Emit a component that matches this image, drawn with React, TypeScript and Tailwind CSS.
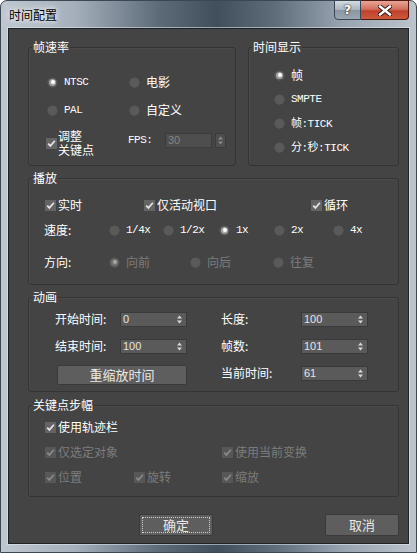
import React from "react";

const cjk = "font-['Noto_Sans_CJK_SC',sans-serif]";
const mono = "font-['Liberation_Mono','Noto_Sans_CJK_SC',monospace]";

function Radio({ on, dim }: { on?: boolean; dim?: boolean }) {
  return (
    <span className="w-[11px] h-[11px] rounded-full shrink-0 flex items-center justify-center bg-[#5a5a5a] shadow-[inset_0_0_1px_rgba(0,0,0,0.5)]">
      {on && (
        <span className={`w-[7px] h-[7px] rounded-full flex items-center justify-center ${dim ? "bg-[#727272]" : "bg-[#a4a4a4]"}`}>
          <span className={`w-[4px] h-[4px] rounded-full ${dim ? "bg-[#a6a6a6]" : "bg-white"}`} />
        </span>
      )}
    </span>
  );
}

function Check({ dim }: { dim?: boolean }) {
  return (
    <span className={`w-[11px] h-[11px] shrink-0 flex items-center justify-center ${dim ? "bg-[#575757]" : "bg-[#646464]"}`}>
      <svg width="9" height="9" viewBox="0 0 9 9">
        <path d="M1.2 4.6 L3.4 6.9 L7.9 1.8" fill="none" stroke={dim ? "#8a8a8a" : "#e4e4e4"} strokeWidth="1.7" />
      </svg>
    </span>
  );
}

function Arrows({ dim }: { dim?: boolean }) {
  return (
    <svg width="5" height="9" viewBox="0 0 5 9" className="shrink-0">
      <path d="M2.5 0.5 L5 3.5 L0 3.5 Z M0 5.5 L5 5.5 L2.5 8.5 Z" fill={dim ? "#8a8a8a" : "#d8d8d8"} />
    </svg>
  );
}

function Spin({ v, w = "w-[67px]" }: { v: string; w?: string }) {
  return (
    <div className={`${w} h-[15px] flex items-center bg-[#5a5a5a] border border-[#3a3a3a] pl-[2px] pr-[4px]`}>
      <span className="flex-1 text-[11px] leading-[13px] text-[#e4e4e4] font-['Liberation_Sans',sans-serif]">{v}</span>
      <Arrows />
    </div>
  );
}

function RadioItem({ label, on, dim, w, isMono }: { label: string; on?: boolean; dim?: boolean; w?: string; isMono?: boolean }) {
  return (
    <div className={`flex items-center h-[16px] ${w ?? ""}`}>
      <Radio on={on} dim={dim} />
      <span
        className={`ml-[6px] ${isMono ? `${mono} text-[11px] tracking-[-0.5px]` : `${cjk} text-[12px]`} leading-[16px] whitespace-nowrap ${
          dim ? "text-[#7c7c7c]" : "text-white"
        }`}
      >
        {label}
      </span>
    </div>
  );
}

function CheckItem({ label, dim, w }: { label: string; dim?: boolean; w?: string }) {
  return (
    <div className={`flex items-center h-[16px] ${w ?? ""}`}>
      <Check dim={dim} />
      <span className={`ml-[2px] ${cjk} text-[12px] leading-[16px] whitespace-nowrap ${dim ? "text-[#7c7c7c]" : "text-white"}`}>
        {label}
      </span>
    </div>
  );
}

function Group({ title, className, children }: { title: string; className?: string; children: React.ReactNode }) {
  return (
    <div className={`relative border border-[#343434] rounded-[3px] shadow-[inset_1px_1px_0_rgba(255,255,255,0.04)] ${className ?? ""}`}>
      <span className={`absolute -top-[9px] left-[3px] px-[1px] bg-[#444] ${cjk} text-[12px] leading-[16px] text-white`}>
        {title}
      </span>
      {children}
    </div>
  );
}

function Label({ text, w }: { text: string; w: string }) {
  return <span className={`${w} shrink-0 ${cjk} text-[12px] leading-[16px] text-white whitespace-nowrap`}>{text}</span>;
}

function Btn({ text, focus, className }: { text: string; focus?: boolean; className?: string }) {
  return (
    <div
      className={`relative flex items-center justify-center bg-[#5e5e5e] border border-[#3a3a3a] rounded-[2px] ${cjk} text-[13px] text-[#e8e8e8] ${className ?? ""}`}
    >
      {focus && <span className="absolute inset-[2px] border border-dotted border-[#cfcfcf]" />}
      {text}
    </div>
  );
}

export default function App() {
  return (
    <div className="w-[417px] h-[553px] bg-white">
      <div className="w-[417px] h-[553px] flex flex-col px-[7px] pb-[8px] rounded-t-[7px] border border-[#3b4753] bg-[linear-gradient(90deg,#bfc7cf_0%,#a4afbb_18%,#5d6a78_38%,#414e5c_52%,#5f6c7a_66%,#97a3b0_82%,#bcc4cc_100%)]">
        {/* title bar */}
        <div className="h-[27px] flex items-start justify-between shrink-0">
          <span className={`mt-[6px] ml-[1px] ${cjk} text-[12px] leading-[16px] text-black [text-shadow:0_0_5px_#fff,0_0_8px_rgba(255,255,255,0.8)]`}>
            时间配置
          </span>
          <div className="flex -mt-[1px]">
            <div className="w-[27px] h-[20px] flex items-center justify-center rounded-bl-[4px] border border-[#3c4652] bg-[linear-gradient(180deg,#d4dbe2_0%,#aab4be_48%,#8a96a2_52%,#9aa6b2_100%)]">
              <span className="font-['DejaVu_Sans',sans-serif] font-bold text-[13px] leading-[14px] text-white [text-shadow:0_0_1px_#222,0_0_2px_#222]">?</span>
            </div>
            <div className="w-[48px] h-[20px] flex items-center justify-center rounded-br-[4px] border border-l-0 border-[#4a1a12] bg-[linear-gradient(180deg,#e8a596_0%,#d3705d_45%,#c0412b_55%,#cc5a3c_100%)]">
              <svg width="14" height="11" viewBox="0 0 14 11">
                <path d="M2 1.5 L12 9.5 M12 1.5 L2 9.5" stroke="#3a1a14" strokeWidth="4.4" strokeLinecap="square" />
                <path d="M2 1.5 L12 9.5 M12 1.5 L2 9.5" stroke="#fff" strokeWidth="2.4" strokeLinecap="square" />
              </svg>
            </div>
          </div>
        </div>

        {/* client */}
        <div className="flex-1 flex flex-col bg-[#444] border border-[#1e2328] shadow-[0_0_0_1px_rgba(230,236,242,0.55)] pt-[18px] pl-[19px] pr-[9px]">
          {/* row 1 */}
          <div className="flex gap-[12px]">
            <Group title="帧速率" className="w-[208px] h-[119px] pt-[26px] pl-[18px]">
              <div className="flex">
                <RadioItem label="NTSC" on isMono w="w-[82px]" />
                <RadioItem label="电影" />
              </div>
              <div className="flex mt-[12px]">
                <RadioItem label="PAL" isMono w="w-[82px]" />
                <RadioItem label="自定义" />
              </div>
              <div className="flex items-center mt-[11px] -ml-[1px]">
                <div className="w-[82px] flex items-center">
                  <Check />
                  <div className={`ml-[1px] ${cjk} text-[12px] text-white flex flex-col`}>
                    <span className="leading-[13px]">调整</span>
                    <span className="leading-[15px]">关键点</span>
                  </div>
                </div>
                <span className={`${mono} text-[11px] tracking-[-0.5px] text-white w-[37px] -mt-[5px]`}>FPS:</span>
                <div className="flex items-center gap-[3px] -mt-[5px]">
                  <div className="w-[47px] h-[15px] flex items-center bg-[#4e4e4e] border border-[#3c3c3c] pl-[2px]">
                    <span className="text-[11px] leading-[13px] text-[#858585] font-['Liberation_Sans',sans-serif]">30</span>
                  </div>
                  <div className="w-[11px] h-[15px] flex items-center justify-center bg-[#4e4e4e] border border-[#3c3c3c]">
                    <Arrows dim />
                  </div>
                </div>
              </div>
            </Group>
            <Group title="时间显示" className="flex-1 h-[119px] pt-[19px] pl-[25px] flex flex-col gap-[8.3px]">
              <RadioItem label="帧" on />
              <RadioItem label="SMPTE" isMono />
              <RadioItem label="帧:TICK" isMono />
              <RadioItem label="分:秒:TICK" isMono />
            </Group>
          </div>

          {/* 播放 */}
          <Group title="播放" className="mt-[12px] h-[107px] pt-[18px]">
            <div className="flex pl-[16px]">
              <CheckItem label="实时" w="w-[99px]" />
              <CheckItem label="仅活动视口" w="w-[167px]" />
              <CheckItem label="循环" />
            </div>
            <div className="flex items-center mt-[9px] pl-[15px]">
              <Label text="速度:" w="w-[65px]" />
              <RadioItem label="1/4x" isMono w="w-[54px]" />
              <RadioItem label="1/2x" isMono w="w-[56px]" />
              <RadioItem label="1x" on isMono w="w-[55px]" />
              <RadioItem label="2x" isMono w="w-[59px]" />
              <RadioItem label="4x" isMono />
            </div>
            <div className="flex items-center mt-[16px] pl-[15px]">
              <Label text="方向:" w="w-[65px]" />
              <RadioItem label="向前" on dim w="w-[81px]" />
              <RadioItem label="向后" dim w="w-[83px]" />
              <RadioItem label="往复" dim />
            </div>
          </Group>

          {/* 动画 */}
          <Group title="动画" className="mt-[12px] h-[95px] pt-[13px] pl-[26px]">
            <div className="flex items-center">
              <Label text="开始时间:" w="w-[65px]" />
              <Spin v="0" />
              <span className="w-[34px]" />
              <Label text="长度:" w="w-[80px]" />
              <Spin v="100" />
            </div>
            <div className="flex items-center mt-[11px]">
              <Label text="结束时间:" w="w-[65px]" />
              <Spin v="100" />
              <span className="w-[34px]" />
              <Label text="帧数:" w="w-[80px]" />
              <Spin v="101" />
            </div>
            <div className="flex items-start mt-[11px]">
              <Btn text="重缩放时间" className="ml-[2px] w-[130px] h-[20px]" />
              <span className="w-[34px]" />
              <div className="flex items-center">
                <Label text="当前时间:" w="w-[80px]" />
                <Spin v="61" />
              </div>
            </div>
          </Group>

          {/* 关键点步幅 */}
          <Group title="关键点步幅" className="mt-[13px] h-[92px] pt-[13px] pl-[16px]">
            <div className="flex">
              <CheckItem label="使用轨迹栏" />
            </div>
            <div className="flex mt-[9px]">
              <CheckItem label="仅选定对象" dim w="w-[177px]" />
              <CheckItem label="使用当前变换" dim />
            </div>
            <div className="flex mt-[9px]">
              <CheckItem label="位置" dim w="w-[89px]" />
              <CheckItem label="旋转" dim w="w-[88px]" />
              <CheckItem label="缩放" dim />
            </div>
          </Group>

          {/* buttons */}
          <div className="flex justify-end mt-[17px]">
            <Btn text="确定" focus className="w-[74px] h-[22px] mr-[112px]" />
            <Btn text="取消" className="w-[74px] h-[22px]" />
          </div>
        </div>
      </div>
    </div>
  );
}
